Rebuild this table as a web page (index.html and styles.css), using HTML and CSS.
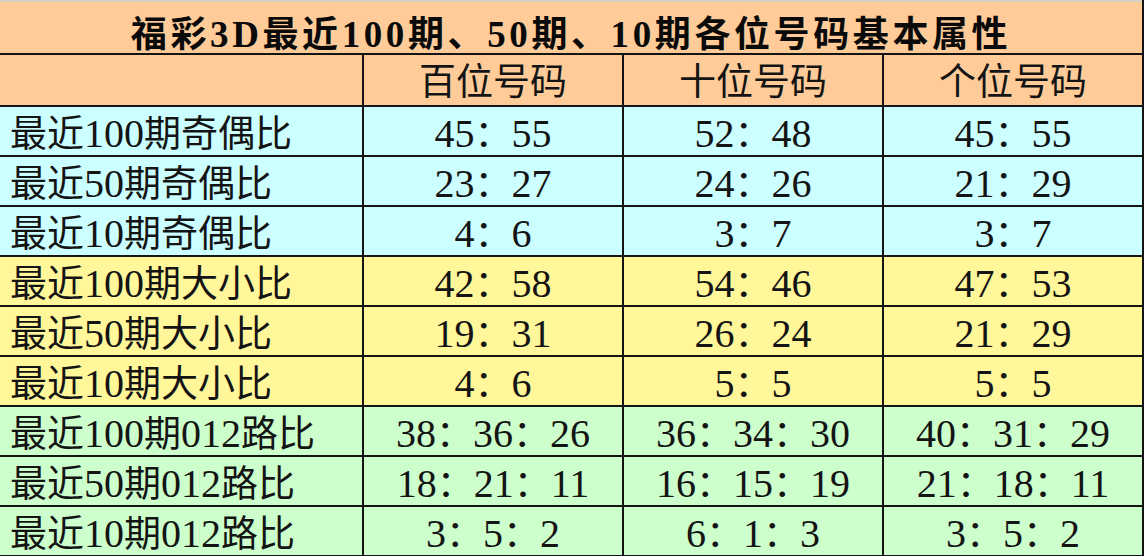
FILE: index.html
```html
<!DOCTYPE html>
<html lang="zh">
<head>
<meta charset="utf-8">
<title>福彩3D基本属性</title>
<link rel="stylesheet" href="styles.css">
</head>
<body>
<table class="stats">
  <colgroup>
    <col class="c-label">
    <col class="c-val">
    <col class="c-val">
    <col class="c-val">
  </colgroup>
  <tr class="row-title"><th colspan="4">福彩<span class="n">3D</span>最近<span class="n">100</span>期、<span class="n">50</span>期、<span class="n">10</span>期各位号码基本属性</th></tr>
  <tr class="row-head"><th></th><th>百位号码</th><th>十位号码</th><th>个位号码</th></tr>
  <tr class="blue"><td class="label">最近<span class="n">100</span>期奇偶比</td><td><span class="n">45</span>：<span class="n">55</span></td><td><span class="n">52</span>：<span class="n">48</span></td><td><span class="n">45</span>：<span class="n">55</span></td></tr>
  <tr class="blue"><td class="label">最近<span class="n">50</span>期奇偶比</td><td><span class="n">23</span>：<span class="n">27</span></td><td><span class="n">24</span>：<span class="n">26</span></td><td><span class="n">21</span>：<span class="n">29</span></td></tr>
  <tr class="blue"><td class="label">最近<span class="n">10</span>期奇偶比</td><td><span class="n">4</span>：<span class="n">6</span></td><td><span class="n">3</span>：<span class="n">7</span></td><td><span class="n">3</span>：<span class="n">7</span></td></tr>
  <tr class="yellow"><td class="label">最近<span class="n">100</span>期大小比</td><td><span class="n">42</span>：<span class="n">58</span></td><td><span class="n">54</span>：<span class="n">46</span></td><td><span class="n">47</span>：<span class="n">53</span></td></tr>
  <tr class="yellow"><td class="label">最近<span class="n">50</span>期大小比</td><td><span class="n">19</span>：<span class="n">31</span></td><td><span class="n">26</span>：<span class="n">24</span></td><td><span class="n">21</span>：<span class="n">29</span></td></tr>
  <tr class="yellow"><td class="label">最近<span class="n">10</span>期大小比</td><td><span class="n">4</span>：<span class="n">6</span></td><td><span class="n">5</span>：<span class="n">5</span></td><td><span class="n">5</span>：<span class="n">5</span></td></tr>
  <tr class="green"><td class="label">最近<span class="n">100</span>期<span class="n">012</span>路比</td><td><span class="n">38</span>：<span class="n">36</span>：<span class="n">26</span></td><td><span class="n">36</span>：<span class="n">34</span>：<span class="n">30</span></td><td><span class="n">40</span>：<span class="n">31</span>：<span class="n">29</span></td></tr>
  <tr class="green"><td class="label">最近<span class="n">50</span>期<span class="n">012</span>路比</td><td><span class="n">18</span>：<span class="n">21</span>：<span class="n">11</span></td><td><span class="n">16</span>：<span class="n">15</span>：<span class="n">19</span></td><td><span class="n">21</span>：<span class="n">18</span>：<span class="n">11</span></td></tr>
  <tr class="green"><td class="label">最近<span class="n">10</span>期<span class="n">012</span>路比</td><td><span class="n">3</span>：<span class="n">5</span>：<span class="n">2</span></td><td><span class="n">6</span>：<span class="n">1</span>：<span class="n">3</span></td><td><span class="n">3</span>：<span class="n">5</span>：<span class="n">2</span></td></tr>
</table>
</body>
</html>
```

FILE: styles.css
```css
html, body {
  margin: 0;
  padding: 0;
  background: #ffffff;
}

.stats {
  width: 1143px;
  table-layout: fixed;
  border-collapse: collapse;
  font-family: "Noto Sans CJK SC", "Liberation Serif", sans-serif;
  color: #141414;
}

.c-label { width: 363px; }
.c-val { width: 260px; }

.stats th,
.stats td {
  border: 2px solid #141414;
  padding: 0;
  text-align: center;
  font-size: 37px;
  font-weight: normal;
  line-height: 34px;
  white-space: nowrap;
  vertical-align: middle;
}

.n {
  font-family: "Liberation Serif", serif;
  font-size: 40px;
  line-height: 34px;
}

.stats tr:first-child th {
  border-top: 2px solid #d8cfc4;
}

.stats tr th:first-child,
.stats tr td:first-child {
  border-left: none;
}

.row-title th {
  height: 41px;
  padding-top: 10px;
  background: #ffcc99;
  font-weight: bold;
  font-size: 36px;
  letter-spacing: 3.6px;
  color: #0a0a0a;
}

.row-title .n {
  font-size: 37px;
  font-weight: bold;
}

.row-head th {
  height: 48px;
  padding-top: 0;
  padding-bottom: 2px;
  background: #ffcc99;
}

.stats tr.blue td,
.stats tr.yellow td,
.stats tr.green td {
  height: 46px;
  padding-top: 2px;
}

.blue td { background: #ccffff; }
.yellow td { background: #fff799; }
.green td { background: #ccffcc; }

.stats td.label {
  text-align: left;
  padding-left: 10px;
}
```
